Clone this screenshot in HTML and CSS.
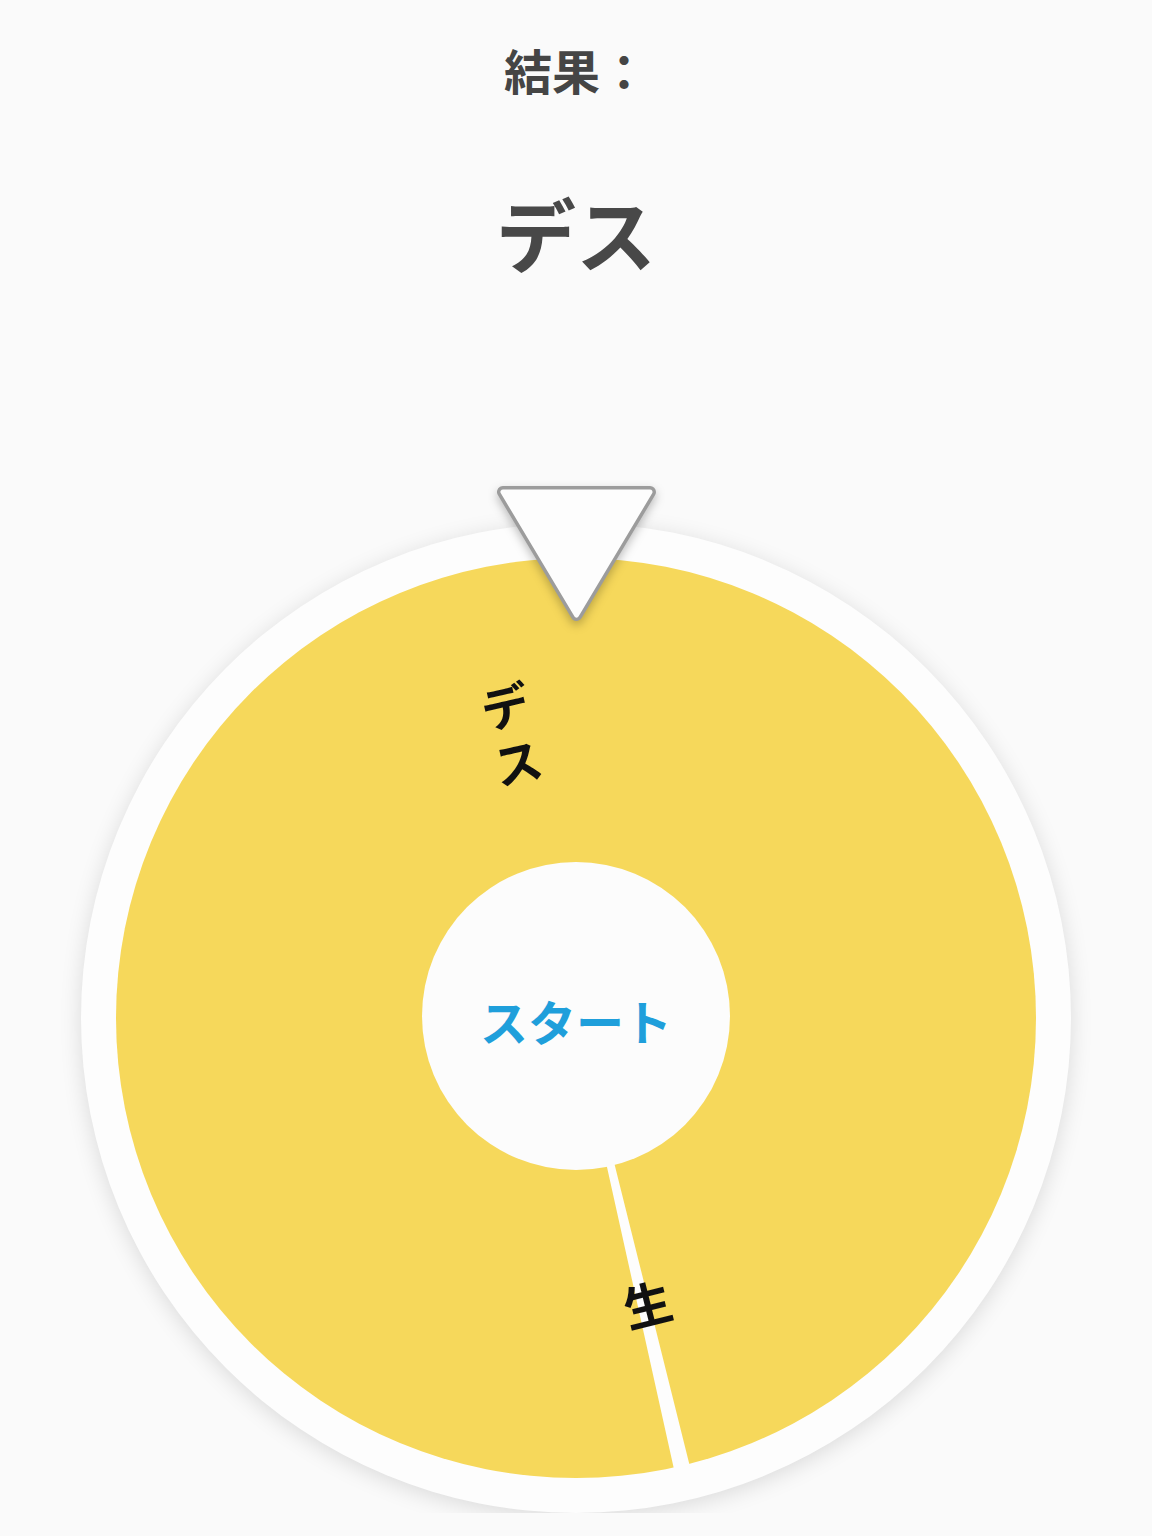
FILE: index.html
```html
<!DOCTYPE html>
<html lang="ja">
<head>
    <meta charset="UTF-8">
    <meta name="viewport" content="width=device-width, initial-scale=1.0">
    <title>ルーレット</title>
    <link rel="stylesheet" href="styles.css">
</head>
<body>

    <main class="roulette">
        <section class="result">
            <h2 class="result-label">結果：</h2>
            <p class="result-value">デス</p>
        </section>

        <div class="wheel">
            <svg class="wheel-face" viewBox="0 0 990 990" width="990" height="990">
                <!-- big slice: デス -->
                <circle cx="495" cy="495" r="460" fill="#f6d85b"/>
                <!-- thin slice: 生 -->
                <path class="slice-thin" d="M495 495 L606.8 943.3 A462 462 0 0 1 595 946.1 Z"/>

                <g transform="rotate(-12.8 495 495)">
                    <text class="wheel-label" x="495" y="173">デ</text>
                    <text class="wheel-label" x="495" y="231">ス</text>
                </g>
                <g transform="rotate(-14 495 495)">
                    <text class="wheel-label" x="495" y="788">生</text>
                </g>
            </svg>

            <!-- pointer at 12 o'clock -->
            <svg class="pointer" viewBox="0 0 159 135" width="159" height="135">
                <polygon points="6,6 153,6 79.5,129" fill="#9c9c9c" stroke="#9c9c9c" stroke-width="12" stroke-linejoin="round"/>
                <polygon points="6,6 153,6 79.5,129" fill="#fdfdfd" stroke="#fdfdfd" stroke-width="5" stroke-linejoin="round"/>
            </svg>

            <button class="start" onclick="spin()">スタート</button>
        </div>
    </main>

    <script>
        function spin() {
            console.log("spin");
        }
    </script>

</body>
</html>
```

FILE: styles.css
```css
body { margin: 0; background: #fafafa; font-family: "Noto Sans CJK JP", "Noto Sans", sans-serif; }
.roulette { width: 1152px; margin: 0 auto; }
.result { text-align: center; padding-top: 43px; }
.result-label { margin: 0; font-size: 48px; line-height: 52px; font-weight: 700; color: #454545; }
.result-value { margin: 94px 0 0; font-size: 80px; line-height: 84px; font-weight: 700; color: #484848; }

.wheel { position: relative; width: 990px; height: 990px; margin: 250px auto 0; border-radius: 50%; background: #fdfdfd; box-shadow: 0 4px 22px rgba(0, 0, 0, 0.13); }
.wheel-face { display: block; }
.slice-thin { fill: #fdfdfd; stroke: #fdfdfd; stroke-width: 4; stroke-linejoin: round; }
.wheel-label { font: 700 48px "Noto Sans CJK JP", sans-serif; fill: #111; text-anchor: middle; dominant-baseline: central; }

.pointer { position: absolute; top: -37px; left: calc(50% - 79.5px); overflow: visible; filter: drop-shadow(0 4px 5px rgba(0, 0, 0, 0.25)); }

.start { position: absolute; top: calc(50% - 156px); left: calc(50% - 154px); width: 308px; height: 308px; padding: 8px 0 0; border: none; border-radius: 50%; background: #fcfcfc; color: #1f9fdb; font-family: inherit; font-size: 48px; font-weight: 700; cursor: pointer; }
```
